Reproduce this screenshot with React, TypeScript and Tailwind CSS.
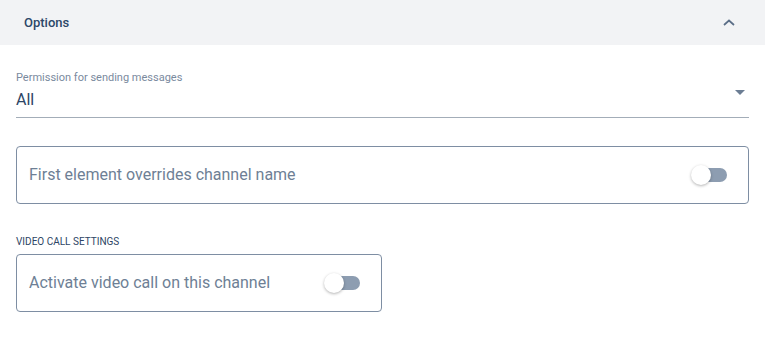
import { useState } from "react";

function Toggle({ on, onChange }: { on: boolean; onChange: () => void }) {
  return (
    <button type="button" onClick={onChange} className="relative w-[36px] h-[20px] shrink-0">
      <span className={`absolute left-[2px] right-0 top-[3px] h-[14px] rounded-full ${on ? "bg-[#3b82f6]" : "bg-[#8d9db1]"}`} />
      <span
        className={`absolute top-0 w-[20px] h-[20px] rounded-full bg-white shadow-[0_1px_3px_rgba(0,0,0,0.3)] ${on ? "left-[16px]" : "left-0"}`}
      />
    </button>
  );
}

export default function App() {
  const [open, setOpen] = useState(true);
  const [override, setOverride] = useState(false);
  const [video, setVideo] = useState(false);

  return (
    <div className="w-[765px] h-[360px] bg-white font-['Roboto',sans-serif]">
      {/* Section header */}
      <div
        className="h-[45px] bg-[#f2f3f5] flex items-center justify-between pl-6 pr-[30px] cursor-pointer"
        onClick={() => setOpen(!open)}
      >
        <span className="text-[13px] font-medium text-[#2c4768]">Options</span>
        <svg width="12" height="7" viewBox="0 0 12 7" fill="none">
          <polyline points="1,6 6,1.5 11,6" stroke="#5b6e87" strokeWidth="1.7" />
        </svg>
      </div>

      {open && (
        <div className="px-4 pt-[26px]">
          {/* Select */}
          <div className="border-b border-[#a3adb8] pb-[7px]">
            <div className="text-[11px] leading-[14px] text-[#7a8a9e]">Permission for sending messages</div>
            <div className="flex items-start justify-between mt-[5px]">
              <span className="text-[16px] leading-[20px] text-[#2d4565]">All</span>
              <svg width="10" height="5" viewBox="0 0 10 5" className="mr-[4px]">
                <polygon points="0,0 10,0 5,5" fill="#6b7d93" />
              </svg>
            </div>
          </div>

          {/* First element toggle */}
          <div className="mt-[28px] h-[58px] border border-[#7e8ea3] rounded-[4px] flex items-center justify-between pl-3 pr-[21px]">
            <span className="text-[16px] text-[#6e7f95]">First element overrides channel name</span>
            <Toggle on={override} onChange={() => setOverride(!override)} />
          </div>

          {/* Video call */}
          <div className="mt-[32px] text-[10px] leading-[12px] text-[#2d4565]">VIDEO CALL SETTINGS</div>
          <div className="mt-[6px] w-[366px] h-[58px] border border-[#7e8ea3] rounded-[4px] flex items-center justify-between pl-3 pr-[21px]">
            <span className="text-[16px] text-[#6e7f95]">Activate video call on this channel</span>
            <Toggle on={video} onChange={() => setVideo(!video)} />
          </div>
        </div>
      )}
    </div>
  );
}
